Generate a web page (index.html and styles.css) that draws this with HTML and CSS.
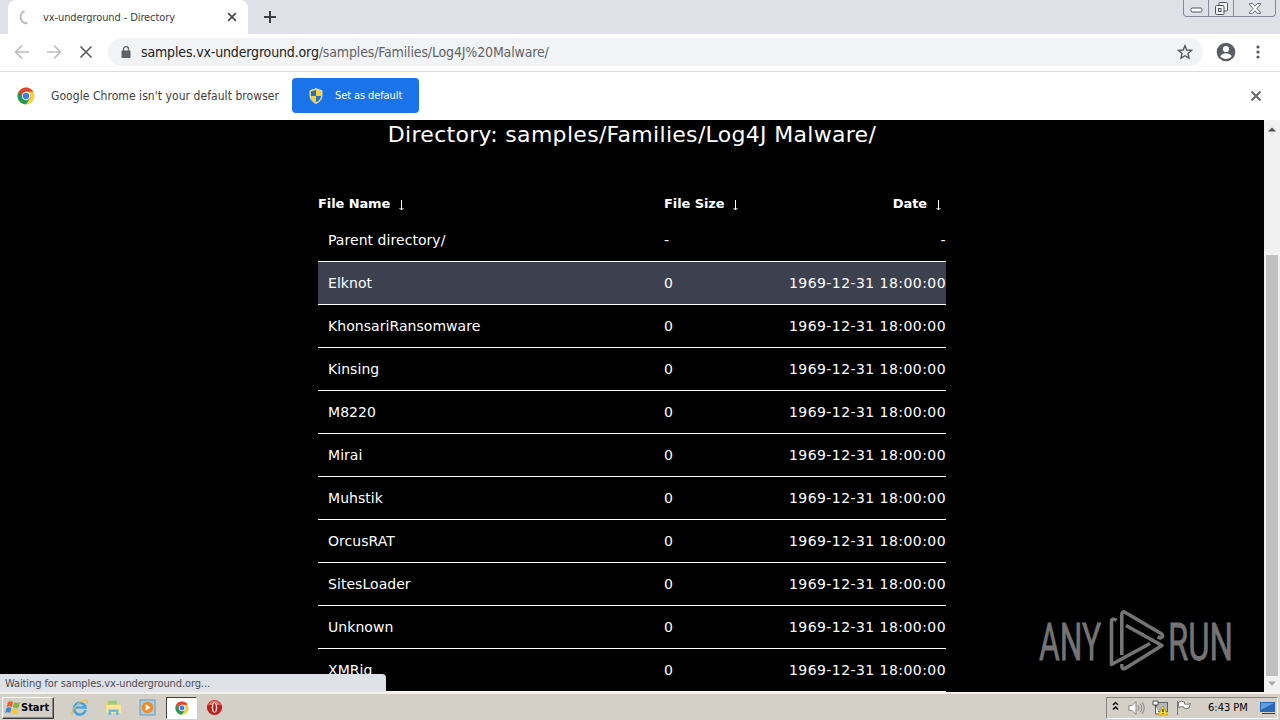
FILE: index.html
```html
<!DOCTYPE html>
<html lang="en">
  <head>
    <meta charset="UTF-8" />
    <meta name="viewport" content="width=device-width, initial-scale=1.0" />
    <title>vx-underground - Directory</title>
    <link rel="stylesheet" href="styles.css">
  </head>
  <body>
    <div class="screen">
      <div class="tabstrip">
        <div class="tab">
          <svg class="spinner" width="16" height="16" viewBox="0 0 16 16"><path d="M5.500 2.200A6.300 6.300 0 0 0 8.500 14.300" fill="none" stroke="#b4b5b7" stroke-width="1.8" /></svg>
          <span class="tab-title">vx-underground - Directory</span>
          <svg width="10" height="10" viewBox="0 0 10 10"><path d="M1.2 1.2l7.6 7.6M8.800 1.200l-7.600 7.600" stroke="#45484c" stroke-width="1.7" /></svg>
        </div>
        <svg class="new-tab" width="12" height="12" viewBox="0 0 12 12"><path d="M6 0v12M0 6h12" stroke="#3c4043" stroke-width="2" /></svg>
        <div class="window-buttons">
          <span class="win-btn"><svg width="13" height="6" viewBox="0 0 13 6"><rect x="1" y="1" width="11" height="4" rx="1.500" fill="#fff" stroke="#50535c" /></svg></span>
          <span class="win-btn"><svg width="13" height="13" viewBox="0 0 13 13" fill="#f4f5f7" stroke="#50535c"><rect x="4" y=".5" width="8.500" height="8.500" rx="1" /><rect x=".5" y="3.500" width="8.500" height="9" rx="1" /><rect x="3.500" y="6.500" width="2.500" height="3" /></svg></span>
          <span class="win-btn win-close"><svg width="12" height="11" viewBox="0 0 12 11"><path d="M.6.6h3L6 3.300 8.400.6h3v1.200L7.900 5.500l3.500 3.700v1.200h-3L6 7.700l-2.400 2.700h-3V9.200l3.500-3.700L.6 1.800z" fill="#fff" stroke="#50535c" stroke-width=".9" /></svg></span>
        </div>
      </div>

      <div class="toolbar">
        <svg width="16" height="16" viewBox="0 0 16 16"><path d="M15 8H2M8 1.500L1.600 8 8 14.500" fill="none" stroke="#bbbdbf" stroke-width="1.700" /></svg>
        <svg width="16" height="16" viewBox="0 0 16 16"><path d="M1 8h13M8 1.500L14.400 8 8 14.500" fill="none" stroke="#bbbdbf" stroke-width="1.700" /></svg>
        <svg width="16" height="16" viewBox="0 0 16 16"><path d="M2.500 2.500l11 11M13.500 2.500l-11 11" stroke="#5a5d61" stroke-width="1.700" /></svg>
        <div class="omnibox">
          <svg width="10" height="12" viewBox="0 0 10 12"><rect x=".5" y="4.500" width="9" height="7.500" rx="1" fill="#5f6368" /><path d="M2.500 5V3a2.500 2.300 0 0 1 5 0v2" fill="none" stroke="#5f6368" stroke-width="1.300" /></svg>
          <span class="url"><span class="host">samples.vx-underground.org</span>/samples/Families/Log4J%20Malware/</span>
          <svg class="star" width="16" height="16" viewBox="0 0 16 16"><path d="M8 1.700l1.800 4.300 4.700.4-3.500 3.100 1 4.600-4-2.400-4 2.400 1-4.600-3.500-3.100 4.700-.4z" fill="none" stroke="#55595e" stroke-width="1.400" /></svg>
        </div>
        <svg class="avatar" width="20" height="20" viewBox="0 0 20 20"><circle cx="10" cy="10" r="9.300" fill="#5a5d62" /><circle cx="10" cy="7" r="3.100" fill="#fff" /><path d="M4.300 14.200c1.500-2.300 3.500-3 5.700-3s4.200.7 5.700 3c-1.500 1.900-3.500 2.700-5.700 2.700s-4.200-.8-5.700-2.700z" fill="#fff" /></svg>
        <svg class="dots" width="4" height="14" viewBox="0 0 4 14" fill="#55585d"><circle cx="2" cy="2" r="1.600" /><circle cx="2" cy="7" r="1.600" /><circle cx="2" cy="12" r="1.600" /></svg>
      </div>

      <div class="infobar">
        <svg width="18" height="18" viewBox="0 0 18 18"><use href="#chrome" /></svg>
        <span class="info-text">Google Chrome isn't your default browser</span>
        <button class="default-btn">
          <svg width="14" height="16" viewBox="0 0 14 16"><path d="M7 .5l6 2v5c0 4-3 6.500-6 8-3-1.500-6-4-6-8v-5z" fill="#f4d03c" /><path d="M7 2L2 3.500V8h5zM7 8h5c-.2 3-2.500 5-5 6.200z" fill="#286fc4" /><path d="M7 .7l6 2v5c0 4-3 6.300-6 7.700-3-1.400-6-3.700-6-7.700v-5z" fill="none" stroke="#d7dccf" /></svg>
          <span>Set as default</span>
        </button>
        <svg class="info-close" width="12" height="12" viewBox="0 0 12 12"><path d="M1.500 1.500l9 9M10.500 1.500l-9 9" stroke="#5f6368" stroke-width="1.800" /></svg>
      </div>

      <div class="viewport">
        <div class="page">
          <h1>Directory: samples/Families/Log4J Malware/</h1>
          <table class="listing">
            <thead>
              <tr>
                <th>File Name<svg class="arrow" width="7" height="11" viewBox="0 0 7 11"><path d="M3.500 0v10M1.500 8l2 2 2-2" fill="none" stroke="#fff" /></svg></th>
                <th>File Size<svg class="arrow" width="7" height="11" viewBox="0 0 7 11"><path d="M3.500 0v10M1.500 8l2 2 2-2" fill="none" stroke="#fff" /></svg></th>
                <th>Date<svg class="arrow" width="7" height="11" viewBox="0 0 7 11"><path d="M3.500 0v10M1.500 8l2 2 2-2" fill="none" stroke="#fff" /></svg></th>
              </tr>
            </thead>
            <tbody>
              <tr><td>Parent directory/</td><td>-</td><td>-</td></tr>
              <tr class="hovered"><td>Elknot</td><td>0</td><td>1969-12-31 18:00:00</td></tr>
              <tr><td>KhonsariRansomware</td><td>0</td><td>1969-12-31 18:00:00</td></tr>
              <tr><td>Kinsing</td><td>0</td><td>1969-12-31 18:00:00</td></tr>
              <tr><td>M8220</td><td>0</td><td>1969-12-31 18:00:00</td></tr>
              <tr><td>Mirai</td><td>0</td><td>1969-12-31 18:00:00</td></tr>
              <tr><td>Muhstik</td><td>0</td><td>1969-12-31 18:00:00</td></tr>
              <tr><td>OrcusRAT</td><td>0</td><td>1969-12-31 18:00:00</td></tr>
              <tr><td>SitesLoader</td><td>0</td><td>1969-12-31 18:00:00</td></tr>
              <tr><td>Unknown</td><td>0</td><td>1969-12-31 18:00:00</td></tr>
              <tr><td>XMRig</td><td>0</td><td>1969-12-31 18:00:00</td></tr>
            </tbody>
          </table>
        </div>
        <div class="scrollbar">
          <svg width="8" height="5" viewBox="0 0 8 5"><path d="M0 4.500L4 .5l4 4z" fill="#505050" /></svg>
          <div class="thumb"></div>
          <svg width="8" height="5" viewBox="0 0 8 5"><path d="M0 .5h8l-4 4z" fill="#a3a3a3" /></svg>
        </div>
        <div class="status">Waiting for samples.vx-underground.org...</div>
        <svg class="watermark" width="204" height="68" viewBox="0 0 204 68">
          <g class="mark-text">
            <text x="1" y="51" textLength="62" lengthAdjust="spacingAndGlyphs">ANY</text>
            <text x="130" y="51" textLength="65" lengthAdjust="spacingAndGlyphs">RUN</text>
          </g>
          <g fill="none" stroke="#747474" stroke-width="3.600" stroke-linejoin="round">
            <path d="M78.500 11.500Q73.500 8 73.500 13v42.500l38.500-21" />
            <path d="M83.800 46V6q0-4.500 3.500-2.500L123 24.500q3.500 2.500-.5 4.500l-3-1" />
            <path d="M88 16.500l36 20-37 23q-4 1.500-3-4.500" />
          </g>
        </svg>
      </div>

      <div class="taskbar">
        <div class="start">
          <svg width="16" height="15" viewBox="0 0 16 15"><path d="M3 2q2.500-1.500 5 0L6.800 7q-2.300-1.500-5 0z" fill="#e8602c" /><path d="M9 2.300q2.500 1.500 6 0L13.500 7.400q-3 1.200-5.500-.1z" fill="#7fb842" /><path d="M1.400 8q2.600-1.500 5 0l-1.200 5q-2.300-1.600-5 0z" fill="#3f88d0" /><path d="M7.600 8.300q2.500 1.300 5.500 0l-1.300 5q-3 1.500-5.500 0z" fill="#f6c42e" /></svg>
          <b>Start</b>
        </div>
        <div class="quick">
          <svg width="17" height="17" viewBox="0 0 17 17"><path d="M14.500 11A5.800 5.800 0 1 1 14.500 8.500H4.500" fill="none" stroke="#45a5e2" stroke-width="2.600" /><path d="M1.500 15.500C-1 12 10-.5 16 1.500c1 .5.500 2-.5 3.500" fill="none" stroke="#e9bd42" stroke-width="1.200" /></svg>
          <svg width="17" height="17" viewBox="0 0 17 17"><path d="M1 3h5l1 1h8v9H1z" fill="#efcf68" /><path d="M3 1.500h9v4H3z" fill="#9bcc86" /><path d="M1 6h15v8H1z" fill="#f8e49b" /><path d="M3.500 16v-5.500h10V16h-2.500v-3H6v3z" fill="#68b9dd" /></svg>
          <svg width="17" height="17" viewBox="0 0 17 17"><rect x="1" y="1" width="15" height="15" fill="#a9cee8" stroke="#6b9cc0" /><circle cx="8.500" cy="8.500" r="5.800" fill="#f18a20" /><path d="M6.700 5.200l5 3.300-5 3.300z" fill="#fff" /></svg>
          <span class="active-task"><svg width="14" height="14" viewBox="0 0 18 18"><use href="#chrome" /></svg></span>
          <svg width="17" height="17" viewBox="0 0 17 17"><circle cx="8.500" cy="8.500" r="7.600" fill="#c51d1b" /><path d="M2 6a7 7 0 0 1 13 0z" fill="#e36c60" /><ellipse cx="8.500" cy="8.500" rx="2.800" ry="5.300" fill="#f1dcda" /><ellipse cx="8.500" cy="8.500" rx="1.200" ry="4.200" fill="#a11614" /></svg>
        </div>
        <div class="tray">
          <svg class="chevron" width="7" height="10" viewBox="0 0 7 10"><path d="M1 4l2.500-2.500L6 4M1 8.500L3.500 6 6 8.500" fill="none" stroke="#000" stroke-width="1.400" /></svg>
          <svg class="speaker" width="17" height="16" viewBox="0 0 17 16" fill="none" stroke="#85837f"><path d="M1 5.500h3l4-4v13l-4-4H1z" fill="#fff" /><path d="M10 5.500q2 2.500 0 5M12 3.500q3.500 4.500 0 9M14 2q4.500 6 0 12" /></svg>
          <svg class="network" width="16" height="16" viewBox="0 0 16 16"><rect x="4.500" y="2.500" width="11" height="9" fill="#aeb6c0" stroke="#656565" /><path d="M1 1h5v4H1zM3.500 5v9H7" fill="#fff" stroke="#555" /><path d="M11 6l5 9H6z" fill="#f8da24" stroke="#b89612" stroke-width=".7" /><path d="M11 9v3M11 13v1" stroke="#222" stroke-width="1.200" /></svg>
          <svg class="flag" width="16" height="15" viewBox="0 0 16 15"><path d="M1.500 1v14M2.500 2q3-1.500 6 0v2q3 1 6-.5L13 8q-2 1.500-5 0V7q-2.500-1-5.500.5z" fill="#fff" stroke="#777" /></svg>
          <span class="clock">6:43 PM</span>
          <svg class="desktop" width="16" height="14" viewBox="0 0 16 14"><path d="M0 1h15v10H0z" fill="#2c66b4" /><path d="M1 2h13L1 9z" fill="#5f9ede" /><path d="M2 12h13v1H2z" fill="#24456f" /></svg>
        </div>
      </div>
    </div>

    <svg width="0" height="0" class="defs">
      <symbol id="chrome" viewBox="0 0 18 18">
        <circle cx="9" cy="9" r="8.500" fill="#fbcd3b" />
        <path d="M9 9L1.640 4.750A8.500 8.500 0 0 0 9 17.500l4-6.500z" fill="#229a55" />
        <path d="M9 9L5.500 11 1.640 4.750A8.500 8.500 0 0 1 16.360 4.750H9z" fill="#df4437" />
        <circle cx="9" cy="9" r="4.200" fill="#fff" />
        <circle cx="9" cy="9" r="3.200" fill="#3f80e8" />
      </symbol>
    </svg>
  </body>
</html>
```
FILE: styles.css
```css
* {
  padding: 0;
  margin: 0;
  box-sizing: border-box;
}
body {
  font-family: "DejaVu Sans Condensed", "DejaVu Sans", sans-serif;
  font-size: 11px;
  overflow: hidden;
}
svg {
  display: block;
  flex: none;
}
.defs {
  position: absolute;
}
.screen {
  width: 1280px;
  height: 720px;
  display: flex;
  flex-direction: column;
  background: #fff;
}

/* browser chrome */
.tabstrip {
  height: 34px;
  display: flex;
  background: #dee1e8;
}
.tab {
  width: 240px;
  margin-left: 8px;
  padding: 0 11px;
  display: flex;
  align-items: center;
  background: #fff;
  border-radius: 8px 8px 0 0;
}
.tab-title {
  flex: 1;
  margin-left: 8px;
  color: #3c4043;
  letter-spacing: -0.1px;
  white-space: nowrap;
}
.new-tab {
  margin: 11px 0 0 16px;
}
.window-buttons {
  height: 17px;
  margin: 0 4px 0 auto;
  display: flex;
  border: 1px solid #858a99;
  border-top: none;
  border-radius: 0 0 4px 4px;
}
.win-btn {
  width: 25px;
  display: flex;
  align-items: center;
  justify-content: center;
  border-right: 1px solid #858a99;
}
.win-btn:first-child svg {
  margin-top: 4px;
}
.win-close {
  width: 41px;
  border-right: none;
}
.toolbar {
  height: 38px;
  padding: 0 0 1px 14px;
  display: flex;
  align-items: center;
  gap: 16px;
  border-bottom: 1px solid #dadce0;
}
.omnibox {
  width: 1095px;
  height: 28px;
  margin-left: -2px;
  padding: 0 10px 0 13px;
  display: flex;
  align-items: center;
  background: #f1f3f4;
  border-radius: 14px;
}
.url {
  flex: 1;
  margin-left: 10px;
  font-size: 14px;
  letter-spacing: -0.15px;
  color: #5f6368;
}
.host {
  color: #202124;
}
.avatar {
  margin-left: -3px;
}
.dots {
  margin-left: 4px;
}
.infobar {
  height: 48px;
  padding: 0 18px 1px 17px;
  display: flex;
  align-items: center;
}
.info-text {
  width: 229px;
  margin: 0 12px 0 16px;
  font-size: 12px;
  letter-spacing: 0.06px;
  color: #3c4043;
  white-space: nowrap;
}
.default-btn {
  width: 127px;
  height: 35px;
  padding-left: 17px;
  display: flex;
  align-items: center;
  gap: 12px;
  background: #1a73e8;
  color: #fff;
  border: none;
  border-radius: 4px;
  font: inherit;
  letter-spacing: -0.1px;
  white-space: nowrap;
}
.info-close {
  margin-left: auto;
}

/* directory listing */
.viewport {
  position: relative;
  height: 572px;
  display: flex;
  background: #000;
  color: #fff;
  overflow: hidden;
}
.page {
  width: 1264px;
  font-family: "DejaVu Sans", sans-serif;
}
h1 {
  height: 68px;
  font-size: 22px;
  line-height: 30px;
  font-weight: normal;
  letter-spacing: 0.3px;
  text-align: center;
}
.listing {
  width: 628px;
  margin: 0 auto;
  table-layout: fixed;
  border-collapse: separate;
  border-spacing: 0;
  font-size: 14px;
}
.listing th {
  height: 31px;
  font-size: 13px;
  letter-spacing: -0.1px;
  text-align: left;
}
.listing th:first-child {
  width: 346px;
}
.listing th:nth-child(2) {
  width: 120px;
}
.listing td {
  height: 43px;
  border-bottom: 1px solid #fff;
  white-space: nowrap;
}
.listing td:first-child {
  padding-left: 10px;
  letter-spacing: 0.05px;
}
.listing th:last-child,
.listing td:last-child {
  text-align: right;
}
.listing td:last-child {
  letter-spacing: 0.44px;
}
.arrow {
  display: inline-block;
  margin-left: 8px;
  vertical-align: -3px;
}
th:last-child .arrow {
  margin-right: 4px;
}
.hovered {
  background: #3d414f;
}
.scrollbar {
  width: 16px;
  padding: 7px 0 6px;
  display: flex;
  flex-direction: column;
  align-items: center;
  background: #f1f1f1;
}
.thumb {
  width: 12px;
  height: 421px;
  margin: auto 0 5px;
  background: #c1c1c1;
}
.status {
  position: absolute;
  left: 0;
  bottom: 0;
  width: 386px;
  height: 18px;
  padding-left: 5px;
  line-height: 19px;
  background: #dee1e8;
  color: #4a4d51;
  letter-spacing: -0.1px;
  border-top-right-radius: 4px;
}
.watermark {
  position: absolute;
  left: 1038px;
  top: 489px;
}
.mark-text {
  font-family: Roboto, sans-serif;
  font-size: 52px;
  fill: #747474;
  stroke: #747474;
  stroke-width: 0.8px;
}

/* taskbar */
.taskbar {
  height: 28px;
  padding: 1px 2px 0;
  display: flex;
  align-items: center;
  background: #d4cfc7;
  border-top: 2px solid #f4f2ee;
}
.start {
  width: 52px;
  height: 22px;
  padding-left: 2px;
  display: flex;
  align-items: center;
  border: 1px solid;
  border-color: #fff #404040 #404040 #fff;
  box-shadow: inset -1px -1px #878480;
}
.quick {
  margin-left: 17px;
  display: flex;
  align-items: center;
  gap: 17px;
}
.active-task {
  width: 31px;
  height: 22px;
  margin: 0 -8px 0 -7px;
  display: flex;
  align-items: center;
  justify-content: center;
  background: #fff;
  border: 1px solid;
  border-color: #404040 #fff #fff #404040;
}
.tray {
  width: 172px;
  height: 22px;
  margin-left: auto;
  padding-left: 5px;
  display: flex;
  align-items: center;
  border: 1px solid;
  border-color: #878480 #fff #fff #878480;
}
.chevron {
  margin-top: -3px;
}
.speaker {
  margin-left: 9px;
}
.network {
  margin-left: 7px;
}
.flag {
  margin-left: 8px;
}
.clock {
  width: 40px;
  margin-left: 16px;
  color: #000;
  white-space: nowrap;
}
.desktop {
  margin-left: 12px;
}
```
